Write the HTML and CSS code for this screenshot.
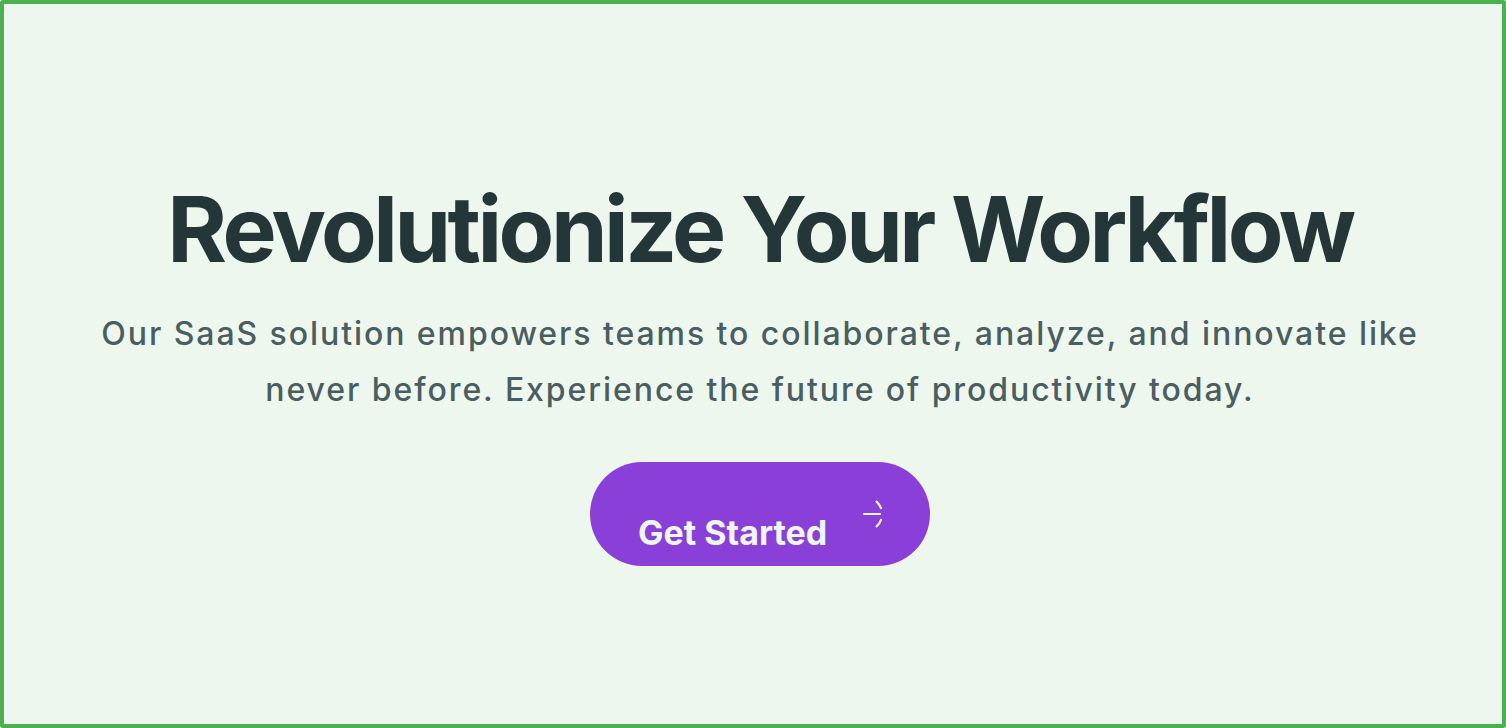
FILE: index.html
```html
<!DOCTYPE html>
<html lang="en">
<head>
<meta charset="utf-8">
<title>Revolutionize Your Workflow</title>
<link rel="stylesheet" href="styles.css">
</head>
<body>
<main class="frame">
  <section class="hero">
    <h1 class="hero-title">Revolutionize Your Workflow</h1>
    <p class="hero-text">Our SaaS solution empowers teams to collaborate, analyze, and innovate like never before. Experience the future of productivity today.</p>
    <a class="cta" href="#">
      <span class="cta-label">Get Started</span>
      <svg class="cta-icon" viewBox="0 0 30 30" width="30" height="30" fill="none" stroke="currentColor" stroke-width="2.2" stroke-linecap="round">
        <line x1="6" y1="15" x2="22" y2="15"/>
        <path d="M18.6 2.6 A17 17 0 0 1 23 9.2"/>
        <path d="M23 20.8 A17 17 0 0 1 18.6 27.4"/>
      </svg>
    </a>
  </section>
</main>
</body>
</html>
```
FILE: styles.css
```css
html, body {
  margin: 0;
  padding: 0;
}
body {
  background: #eef7ee;
  font-family: Inter, "Noto Sans", sans-serif;
}
.frame {
  box-sizing: border-box;
  height: 728px;
  border: 4px solid #4caf50;
  border-radius: 3px;
  background: #eef7ee;
  display: flex;
  align-items: center;
  justify-content: center;
}
.hero {
  display: flex;
  flex-direction: column;
  align-items: center;
  text-align: center;
  padding: 17px 0 0 14px;
}
.hero-title {
  margin: 0;
  font-size: 91px;
  font-weight: 700;
  letter-spacing: -3.5px;
  line-height: 100px;
  color: #243638;
}
.hero-text {
  margin: 27px 0 0;
  max-width: 1340px;
  font-size: 32px;
  font-weight: 500;
  line-height: 56px;
  letter-spacing: 1.93px;
  color: #4a5d61;
}
.cta {
  margin-top: 44px;
  box-sizing: border-box;
  width: 340px;
  height: 104px;
  padding: 0 42px 0 48px;
  border-radius: 52px;
  background: #8b3fd9;
  color: #eef7ee;
  text-decoration: none;
  display: flex;
  align-items: center;
  justify-content: space-between;
}
.cta-label {
  font-size: 34px;
  font-weight: 700;
  padding-top: 37px;
}
.cta-icon {
  display: block;
}
```
